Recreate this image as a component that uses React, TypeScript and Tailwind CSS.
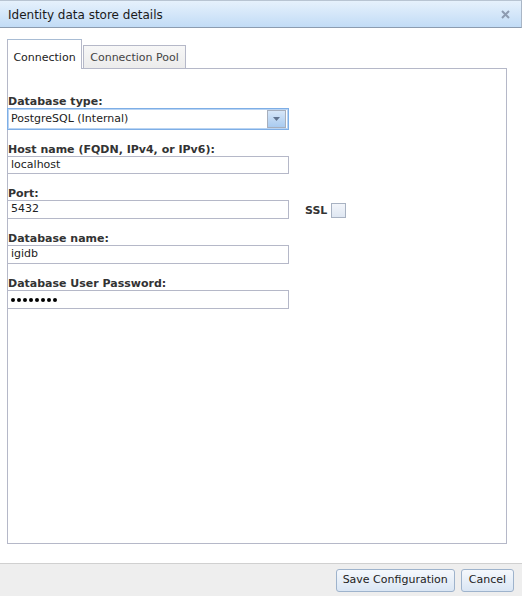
import React from "react";

const font = { fontFamily: "Tahoma, 'DejaVu Sans', sans-serif" };

function Field({ label, children }: { label: string; children: React.ReactNode }) {
  return (
    <div className="mt-[13px] first:mt-0">
      <div className="h-[13px] leading-[13px] text-[11px] font-bold text-[#333] pl-[1px]">{label}</div>
      {children}
    </div>
  );
}

function TextInput({ value, password, h = "h-[19px]" }: { value: string; password?: boolean; h?: string }) {
  return (
    <div className={`w-[282px] ${h} border border-[#b5b8c8] bg-white flex items-center px-[3px] text-[11px] text-[#222]`}>
      {password ? (
        <span className="flex gap-[2px] items-center">
          {Array.from({ length: 8 }).map((_, i) => (
            <span key={i} className="block w-[4px] h-[4px] rounded-full bg-black" />
          ))}
        </span>
      ) : (
        value
      )}
    </div>
  );
}

export default function App() {
  return (
    <div style={font} className="w-[522px] h-[596px] flex flex-col bg-white overflow-hidden">
      {/* Title bar */}
      <div className="h-[28px] shrink-0 flex items-center justify-between pl-[8px] pr-[11px] border-t border-r border-b border-t-[#b8c4d2] border-r-[#a9b6c6] border-b-[#8c9cb0] bg-gradient-to-b from-[#e6f1fc] to-[#c2dcf6]">
        <span className="text-[12px] text-[#1a1a1a] leading-none pt-[1px]">Identity data store details</span>
        <svg width="9" height="9" viewBox="0 0 9 9">
          <path d="M1 1L8 8M8 1L1 8" stroke="#8d9bb0" strokeWidth="2" />
        </svg>
      </div>

      {/* Body */}
      <div className="flex-1 pt-[11px] pl-[7px] pr-[15px] pb-[19px] flex flex-col">
        {/* Tabs */}
        <div className="flex items-end h-[29px] gap-[1px] relative z-10">
          <div className="h-[30px] w-[75px] -mb-[1px] border border-b-0 border-[#b5b8c8] border-t-[#a8bcd4] bg-white flex items-center justify-center text-[11px] text-[#222] pt-[8px]">
            Connection
          </div>
          <div className="h-[23px] w-[103px] border border-b-0 border-[#b5b8c8] bg-gradient-to-b from-[#f7f7f7] to-[#ececec] flex items-center justify-center text-[11px] text-[#444] pt-[3px]">
            Connection Pool
          </div>
        </div>
        {/* Panel */}
        <div className="flex-1 border border-[#b5b8c8] pt-[26px]">
          <div className="flex flex-col -ml-[1px]">
            <Field label="Database type:">
              <div className="w-[282px] h-[22px] border border-[#7eaee6] ring-1 ring-inset ring-[#b9d4f3] bg-white flex items-center justify-between pl-[3px] pr-[2px] text-[11px] text-[#222]">
                <span>PostgreSQL (Internal)</span>
                <span className="w-[19px] h-[18px] border border-[#a7afbd] bg-gradient-to-b from-[#d6e6f8] to-[#a9cbf0] flex items-center justify-center">
                  <svg width="7" height="4" viewBox="0 0 7 4">
                    <path d="M0 0H7L3.5 4Z" fill="#60738f" />
                  </svg>
                </span>
              </div>
            </Field>
            <Field label="Host name (FQDN, IPv4, or IPv6):">
              <TextInput value="localhost" h="h-[18px]" />
            </Field>
            <div className="mt-[13px] flex items-end">
              <div>
                <div className="h-[13px] leading-[13px] text-[11px] font-bold text-[#333] pl-[1px]">Port:</div>
                <TextInput value="5432" />
              </div>
              <div className="ml-[16px] flex items-center">
                <span className="text-[11px] font-bold text-[#333]">SSL</span>
                <span className="ml-[4px] w-[15px] h-[15px] border border-[#a8b2c2] bg-gradient-to-b from-[#f2f5fa] to-[#dfe7f2]" />
              </div>
            </div>
            <Field label="Database name:">
              <TextInput value="igidb" />
            </Field>
            <Field label="Database User Password:">
              <TextInput value="" password />
            </Field>
          </div>
        </div>
      </div>

      {/* Footer */}
      <div className="h-[33px] shrink-0 border-t border-[#d0d0d0] bg-[#eeeeee] flex items-start justify-end gap-[6px] pr-[8px] pt-[5px]">
        <button className="h-[23px] px-[6px] rounded-[3px] border border-[#9eb3cc] bg-gradient-to-b from-[#f5f8fc] to-[#dae6f4] text-[11px] text-[#222]">
          Save Configuration
        </button>
        <button className="h-[23px] px-[7px] rounded-[3px] border border-[#9eb3cc] bg-gradient-to-b from-[#f5f8fc] to-[#dae6f4] text-[11px] text-[#222]">
          Cancel
        </button>
      </div>
    </div>
  );
}
